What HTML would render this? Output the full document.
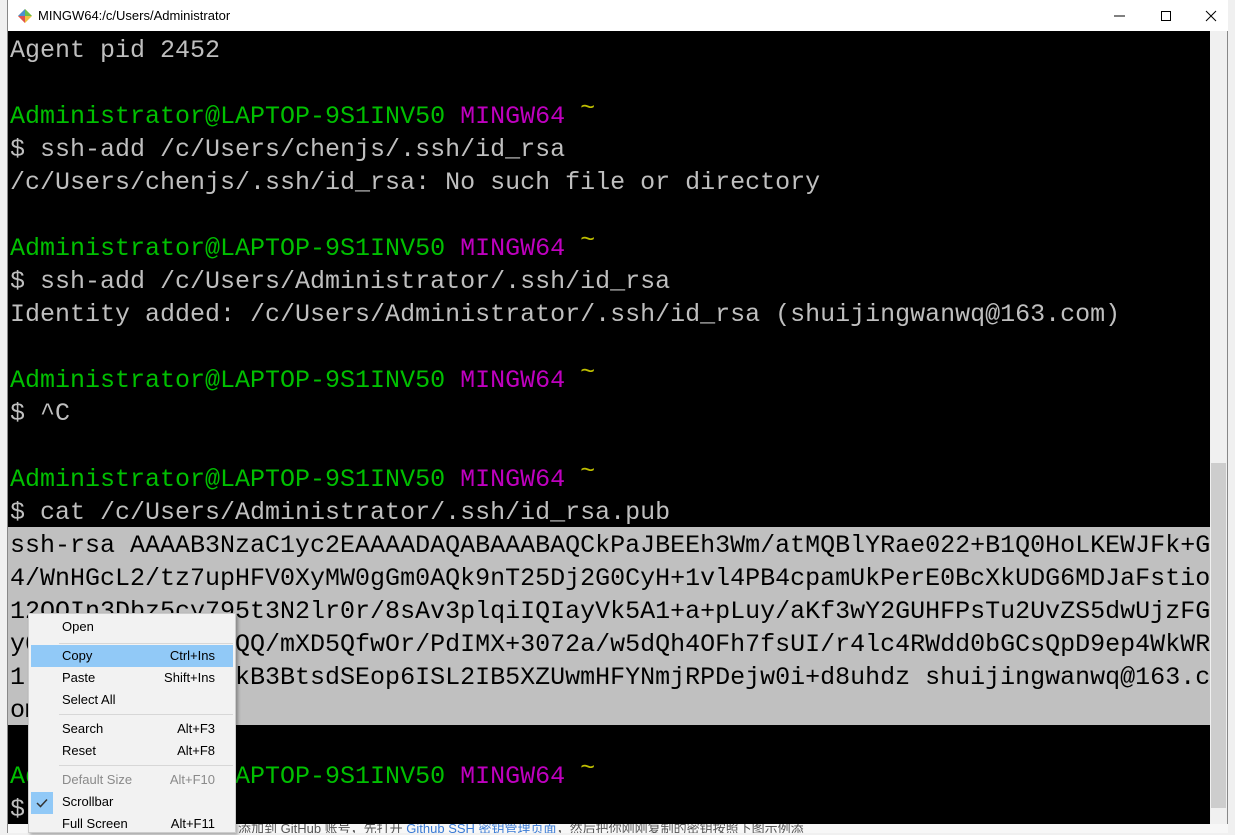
<!DOCTYPE html><html><head><meta charset="utf-8"><style>
body{margin:0;width:1235px;height:833px;overflow:hidden;background:#f0f0f0;position:relative;font-family:"Liberation Sans",sans-serif}
.win{position:absolute;left:7px;top:0;width:1221px;height:833px;background:#fff;border:1px solid #888;border-top:none;box-sizing:border-box}
.title{position:absolute;left:8px;top:0;width:1220px;height:31px;background:#fff}
.title span{position:absolute;left:30px;top:8px;font-size:13px;color:#000}
.term{position:absolute;left:8px;top:31px;width:1202px;height:793px;background:#000;overflow:hidden}
.lines{position:absolute;left:2px;top:3px;font-family:"Liberation Mono",monospace;font-size:25px;line-height:33px;color:#bfbfbf;white-space:pre}
.g{color:#00bf00}.m{color:#bf00bf}.y{color:#bfbf00;position:relative;top:-8px}
.sel{position:absolute;left:0;top:496px;width:1202px;height:198px;background:#c0c0c0}
.sel .lines{color:#000;top:2px}
.sb{position:absolute;left:1210px;top:31px;width:17px;height:793px;background:#f0f0f0}
.thumb{position:absolute;left:1px;top:432px;width:15px;height:345px;background:#cdcdcd}
.bottom{position:absolute;left:8px;top:824px;width:1220px;height:9px;background:#f7f7f7;overflow:hidden;font-size:13px;color:#555}
.menu{position:absolute;left:28px;top:613px;width:208px;height:220px;background:#f2f2f2;border:1px solid #ccc;box-sizing:border-box;font-size:13px;color:#000;box-shadow:2px 2px 3px rgba(0,0,0,.3)}
.it{position:absolute;left:0;width:206px;height:22px;line-height:22px}
.it .l{position:absolute;left:33px}.it .r{position:absolute;right:20px}
.hl{background:#91c9f7;left:2px;width:202px}
.sep{position:absolute;left:30px;width:174px;height:1px;background:#d7d7d7}
</style></head><body>
<div class="win"></div>
<div class="title"><svg style="position:absolute;left:9px;top:8px" width="16" height="16" viewBox="0 0 16 16"><path d="M8 1L15 8 8 15 1 8z" fill="#f0c040"/><path d="M8 1L15 8 8 8z" fill="#6bbf4a"/><path d="M1 8L8 1 8 8z" fill="#4a90d0"/><path d="M1 8L8 8 8 15z" fill="#e05050"/></svg><span>MINGW64:/c/Users/Administrator</span>
<svg style="position:absolute;left:1097px;top:8px" width="120" height="16"><line x1="9" y1="8" x2="20" y2="8" stroke="#000"/><rect x="56.5" y="3.5" width="9" height="9" fill="none" stroke="#000"/><path d="M101 3L111 13M111 3L101 13" stroke="#000"/></svg></div>
<div class="term">
<div class="lines">Agent pid 2452

<span class="g">Administrator@LAPTOP-9S1INV50</span> <span class="m">MINGW64</span> <span class="y">~</span>
$ ssh-add /c/Users/chenjs/.ssh/id_rsa
/c/Users/chenjs/.ssh/id_rsa: No such file or directory

<span class="g">Administrator@LAPTOP-9S1INV50</span> <span class="m">MINGW64</span> <span class="y">~</span>
$ ssh-add /c/Users/Administrator/.ssh/id_rsa
Identity added: /c/Users/Administrator/.ssh/id_rsa (shuijingwanwq@163.com)

<span class="g">Administrator@LAPTOP-9S1INV50</span> <span class="m">MINGW64</span> <span class="y">~</span>
$ ^C

<span class="g">Administrator@LAPTOP-9S1INV50</span> <span class="m">MINGW64</span> <span class="y">~</span>
$ cat /c/Users/Administrator/.ssh/id_rsa.pub







<span class="g">Administrator@LAPTOP-9S1INV50</span> <span class="m">MINGW64</span> <span class="y">~</span>
$</div>
<div class="sel"><div class="lines">ssh-rsa AAAAB3NzaC1yc2EAAAADAQABAAABAQCkPaJBEEh3Wm/atMQBlYRae022+B1Q0HoLKEWJFk+G
4/WnHGcL2/tz7upHFV0XyMW0gGm0AQk9nT25Dj2G0CyH+1vl4PB4cpamUkPerE0BcXkUDG6MDJaFstio
12OOIn3Dbz5cy795t3N2lr0r/8sAv3plqiIQIayVk5A1+a+pLuy/aKf3wY2GUHFPsTu2UvZS5dwUjzFG
y0kLrT8sQfZ5abcQQ/mXD5QfwOr/PdIMX+3072a/w5dQh4OFh7fsUI/r4lc4RWdd0bGCsQpD9ep4WkWR
1lMkE2w7xjuGdWakB3BtsdSEop6ISL2IB5XZUwmHFYNmjRPDejw0i+d8uhdz shuijingwanwq@163.c
om</div></div>
</div>
<div class="sb"><div class="thumb"></div></div>
<div class="bottom"><span style="position:absolute;left:230px;top:-6px">添加到 GitHub 账号，先打开 <span style="color:#3a7bd5">Github SSH 密钥管理页面</span>，然后把你刚刚复制的密钥按照下图示例添</span></div>
<div class="menu">
<div class="it" style="top:2px"><span class="l">Open</span></div>
<div class="sep" style="top:29px"></div>
<div class="it hl" style="top:31px"><span class="l" style="left:31px">Copy</span><span class="r" style="right:18px">Ctrl+Ins</span></div>
<div class="it" style="top:53px"><span class="l">Paste</span><span class="r">Shift+Ins</span></div>
<div class="it" style="top:75px"><span class="l">Select All</span></div>
<div class="sep" style="top:100px"></div>
<div class="it" style="top:104px"><span class="l">Search</span><span class="r">Alt+F3</span></div>
<div class="it" style="top:126px"><span class="l">Reset</span><span class="r">Alt+F8</span></div>
<div class="sep" style="top:151px"></div>
<div class="it" style="top:155px;color:#8a8a8a"><span class="l">Default Size</span><span class="r">Alt+F10</span></div>
<div style="position:absolute;left:2px;top:178px;width:22px;height:22px;background:#91c9f7"></div>
<svg style="position:absolute;left:7px;top:184px" width="12" height="10"><path d="M1 5L4.5 8.5 11 1.5" stroke="#333" stroke-width="1.5" fill="none"/></svg>
<div class="it" style="top:177px"><span class="l">Scrollbar</span></div>
<div class="it" style="top:199px"><span class="l">Full Screen</span><span class="r">Alt+F11</span></div>
</div>
</body></html>
